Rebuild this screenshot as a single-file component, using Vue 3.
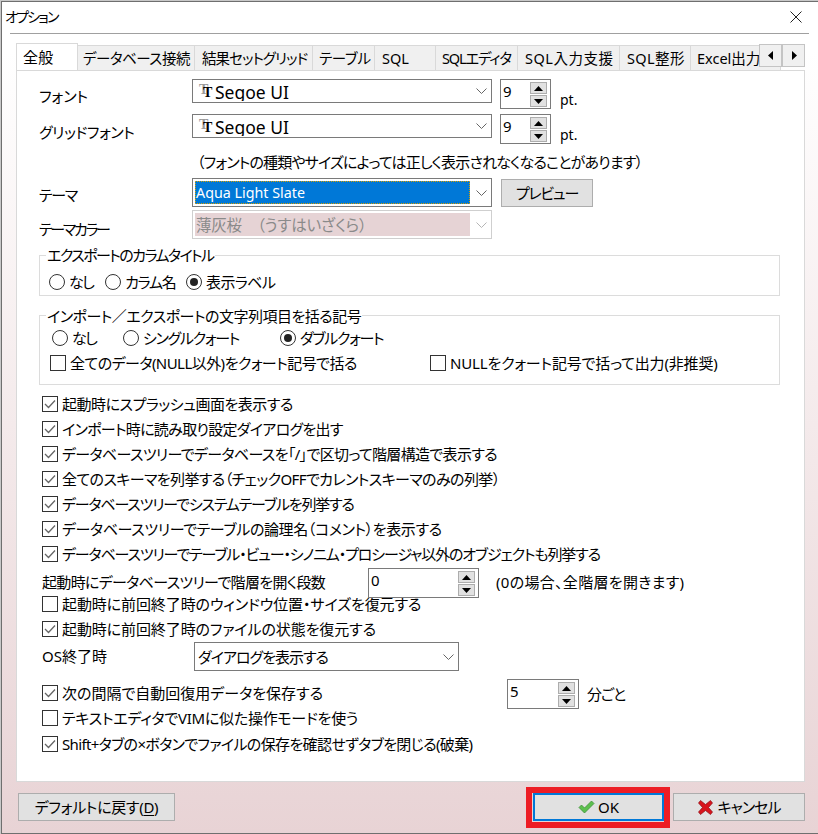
<script setup>
const tabs = [
  { t: '全般', w: 62, pad: 6, ls: 0.3, on: true },
  { t: 'データベース接続', w: 117, pad: 5, ls: -0.5 },
  { t: '結果セットグリッド', w: 118, pad: 7, ls: -0.9 },
  { t: 'テーブル', w: 62, pad: 6, ls: -0.3 },
  { t: 'SQL', w: 61, pad: 7, ls: 0 },
  { t: 'SQLエディタ', w: 82, pad: 6, ls: -1.2 },
  { t: 'SQL入力支援', w: 102, pad: 7, ls: 0.5 },
  { t: 'SQL整形', w: 71, pad: 7, ls: 0.4 },
  { t: 'Excel出力', w: 90, pad: 6, ls: 0 }
]
const checksA = [
  { t: '起動時にスプラッシュ画面を表示する', ls: -0.47 },
  { t: 'インポート時に読み取り設定ダイアログを出す', ls: -0.7 },
  { t: 'データベースツリーでデータベースを「/」で区切って階層構造で表示する', ls: -0.66 },
  { t: '全てのスキーマを列挙する（チェックOFFでカレントスキーマのみの列挙）', ls: -0.6 },
  { t: 'データベースツリーでシステムテーブルを列挙する', ls: -1.17 },
  { t: 'データベースツリーでテーブルの論理名（コメント）を表示する', ls: -0.38 },
  { t: 'データベースツリーでテーブル・ビュー・シノニム・プロシージャ以外のオブジェクトも列挙する', ls: -1.14 }
]
</script>

<template>
  <div class="window">
    <header class="titlebar">
      <span class="title">オプション</span>
      <svg class="close" width="12" height="12" viewBox="0 0 12 12"><path d="M0.5 0.5L11.5 11.5M11.5 0.5L0.5 11.5" stroke="#222" fill="none" /></svg>
    </header>
    <div class="sep"></div>

    <main class="body">
      <div class="tabstrip">
        <div class="tabs">
          <div v-for="tab in tabs" :key="tab.t" class="tab" :class="{ on: tab.on }" :style="{ flexBasis: tab.w + 'px', paddingLeft: tab.pad + 'px', letterSpacing: tab.ls + 'px' }">{{ tab.t }}</div>
        </div>
        <div class="scroller">
          <button class="scrollbtn"><svg width="6" height="9" viewBox="0 0 6 9"><path d="M5 0V9L0 4.5Z" fill="#000" /></svg></button>
          <button class="scrollbtn"><svg width="6" height="9" viewBox="0 0 6 9"><path d="M1 0V9L6 4.5Z" fill="#000" /></svg></button>
        </div>
      </div>

      <section class="panel">
        <div class="row r-font">
          <label class="lbl lbl-a">フォント</label>
          <div class="combo big">
            <span class="tt"><i class="t1">T</i><i class="t2">T</i></span>
            <span class="fontname">Segoe UI</span>
            <svg class="chev" width="11" height="6" viewBox="0 0 11 6"><path d="M0.5 0.5L5.5 5.5L10.5 0.5" stroke="#666" fill="none" /></svg>
          </div>
          <div class="spin s-small"><span class="val">9</span>
            <div class="spinbtns">
              <div class="sb"><svg width="9" height="5" viewBox="0 0 9 5"><path d="M4.5 0L9 5H0Z" /></svg></div>
              <div class="sb"><svg width="9" height="5" viewBox="0 0 9 5"><path d="M4.5 5L9 0H0Z" /></svg></div>
            </div>
          </div>
          <span class="pt">pt.</span>
        </div>
        <div class="row r-font second">
          <label class="lbl lbl-g">グリッドフォント</label>
          <div class="combo big">
            <span class="tt"><i class="t1">T</i><i class="t2">T</i></span>
            <span class="fontname">Segoe UI</span>
            <svg class="chev" width="11" height="6" viewBox="0 0 11 6"><path d="M0.5 0.5L5.5 5.5L10.5 0.5" stroke="#666" fill="none" /></svg>
          </div>
          <div class="spin s-small"><span class="val">9</span>
            <div class="spinbtns">
              <div class="sb"><svg width="9" height="5" viewBox="0 0 9 5"><path d="M4.5 0L9 5H0Z" /></svg></div>
              <div class="sb"><svg width="9" height="5" viewBox="0 0 9 5"><path d="M4.5 5L9 0H0Z" /></svg></div>
            </div>
          </div>
          <span class="pt">pt.</span>
        </div>
        <p class="note">（フォントの種類やサイズによっては正しく表示されなくなることがあります）</p>

        <div class="row r-theme">
          <label class="lbl lbl-b">テーマ</label>
          <div class="combo tall">
            <div class="selected"><span>Aqua Light Slate</span></div>
            <svg class="chev" width="11" height="6" viewBox="0 0 11 6"><path d="M0.5 0.5L5.5 5.5L10.5 0.5" stroke="#666" fill="none" /></svg>
          </div>
          <button class="btn preview">プレビュー</button>
        </div>
        <div class="row r-theme color">
          <label class="lbl lbl-c">テーマカラー</label>
          <div class="combo tall disabled">
            <div class="selected"><span>薄灰桜　（うすはいざくら）</span></div>
            <svg class="chev" width="11" height="6" viewBox="0 0 11 6"><path d="M0.5 0.5L5.5 5.5L10.5 0.5" stroke="#b5b5b5" fill="none" /></svg>
          </div>
        </div>

        <fieldset class="group g1">
          <div class="legend l1">エクスポートのカラムタイトル</div>
          <div class="radios r1">
            <div class="opt s15"><span class="radio"></span>なし</div>
            <div class="opt s12"><span class="radio"></span>カラム名</div>
            <div class="opt s06"><span class="radio on"></span>表示ラベル</div>
          </div>
        </fieldset>

        <fieldset class="group g2">
          <div class="legend l2">インポート／エクスポートの文字列項目を括る記号</div>
          <div class="radios r2">
            <div class="opt s15"><span class="radio"></span>なし</div>
            <div class="opt s13"><span class="radio"></span>シングルクォート</div>
            <div class="opt s13"><span class="radio on"></span>ダブルクォート</div>
          </div>
          <div class="gchecks">
            <div class="opt s055"><span class="box"></span>全てのデータ(NULL以外)をクォート記号で括る</div>
            <div class="opt s017"><span class="box"></span>NULLをクォート記号で括って出力(非推奨)</div>
          </div>
        </fieldset>

        <div class="checks">
          <div v-for="c in checksA" :key="c.t" class="opt chk" :style="{ letterSpacing: c.ls + 'px' }">
            <span class="box"><svg width="12" height="10" viewBox="0 0 12 10"><path d="M1 5L4.5 8.5L11 1.5" stroke="#666" stroke-width="1.3" fill="none" /></svg></span>{{ c.t }}
          </div>
        </div>

        <div class="row r-depth">
          <label class="lbl lbl-d">起動時にデータベースツリーで階層を開く段数</label>
          <div class="spin s-wide"><span class="val">0</span>
            <div class="spinbtns">
              <div class="sb"><svg width="9" height="5" viewBox="0 0 9 5"><path d="M4.5 0L9 5H0Z" /></svg></div>
              <div class="sb"><svg width="9" height="5" viewBox="0 0 9 5"><path d="M4.5 5L9 0H0Z" /></svg></div>
            </div>
          </div>
          <span class="depthnote">(0の場合、全階層を開きます)</span>
        </div>

        <div class="opt chk c-restore"><span class="box"></span>起動時に前回終了時のウィンドウ位置・サイズを復元する</div>
        <div class="opt chk c-next c-file"><span class="box"><svg width="12" height="10" viewBox="0 0 12 10"><path d="M1 5L4.5 8.5L11 1.5" stroke="#666" stroke-width="1.3" fill="none" /></svg></span>起動時に前回終了時のファイルの状態を復元する</div>

        <div class="row r-os">
          <label class="lbl lbl-os">OS終了時</label>
          <div class="combo os">
            <span class="ostext">ダイアログを表示する</span>
            <svg class="chev" width="11" height="6" viewBox="0 0 11 6"><path d="M0.5 0.5L5.5 5.5L10.5 0.5" stroke="#666" fill="none" /></svg>
          </div>
        </div>

        <div class="row r-auto">
          <div class="opt chk c-auto"><span class="box"><svg width="12" height="10" viewBox="0 0 12 10"><path d="M1 5L4.5 8.5L11 1.5" stroke="#666" stroke-width="1.3" fill="none" /></svg></span>次の間隔で自動回復用データを保存する</div>
          <div class="spin s-mid"><span class="val">5</span>
            <div class="spinbtns">
              <div class="sb"><svg width="9" height="5" viewBox="0 0 9 5"><path d="M4.5 0L9 5H0Z" /></svg></div>
              <div class="sb"><svg width="9" height="5" viewBox="0 0 9 5"><path d="M4.5 5L9 0H0Z" /></svg></div>
            </div>
          </div>
          <span class="per">分ごと</span>
        </div>

        <div class="opt chk c-vim"><span class="box"></span>テキストエディタでVIMに似た操作モードを使う</div>
        <div class="opt chk c-shift"><span class="box"><svg width="12" height="10" viewBox="0 0 12 10"><path d="M1 5L4.5 8.5L11 1.5" stroke="#666" stroke-width="1.3" fill="none" /></svg></span>Shift+タブの×ボタンでファイルの保存を確認せずタブを閉じる(破棄)</div>
      </section>

      <footer class="footer">
        <button class="btn default">デフォルトに戻す(<u>D</u>)</button>
        <div class="okmark">
          <button class="btn ok">
            <svg width="17" height="14" viewBox="0 0 17 14"><path d="M1 7.5L3.5 5L6.5 8L13.5 1L16 3.5L6.5 13Z" fill="#5cc04e" stroke="#3f8f3a" stroke-width="0.8" /></svg>
            OK
          </button>
        </div>
        <button class="btn cancel">
          <svg width="15" height="15" viewBox="0 0 15 15"><path d="M2.5 0.5L7.5 4.5L12.5 0.5L14.5 3L10.5 7.5L14.5 12L12.5 14.5L7.5 10.5L2.5 14.5L0.5 12L4.5 7.5L0.5 3Z" fill="#d8141c" stroke="#8c1017" stroke-width="0.7" /></svg>
          <span class="canceltext">キャンセル</span>
        </button>
      </footer>
    </main>
  </div>
</template>

<style>
html, body { margin: 0; background: #c8c8c8; }
#app { width: 818px; height: 834px; overflow: hidden; }
</style>

<style scoped>
* { box-sizing: border-box; }
.window {
  margin: 1px 0 0 1px;
  height: 833px;
  width: 817px;
  border: 1px solid #6f6f6f;
  border-right: 0;
  display: flex;
  flex-direction: column;
  background: linear-gradient(#fff 0, #fff 6%, #e8d3d5 100%);
  font-family: "Noto Sans", "Noto Sans CJK JP", sans-serif;
  font-size: 15px;
  font-feature-settings: "palt";
  color: #000;
  line-height: 20px;
}
.titlebar { height: 31px; flex: none; background: #fff; display: flex; align-items: center; justify-content: space-between; padding: 0 16px 2px 3px; }
.title { font-size: 14px; letter-spacing: -1.8px; }
.sep { height: 1px; margin: 0 9px 0 8px; background: #a0a0a0; flex: none; }
.body { flex: 1; padding: 9px 0 0 14px; display: flex; flex-direction: column; }

.tabstrip { position: relative; width: 789px; height: 27px; overflow: hidden; flex: none; }
.tabs { display: flex; align-items: flex-end; height: 27px; }
.tab { flex: none; height: 25px; background: #f0f0f0; border: 1px solid #d9d9d9; border-left: 0; border-bottom: 0; font-size: 14.5px; line-height: 24px; white-space: nowrap; overflow: hidden; }
.tab.on { height: 28px; margin-bottom: -1px; background: #fff; border-left: 1px solid #d9d9d9; font-size: 15px; line-height: 26px; }
.scroller { position: absolute; right: 0; top: 1px; display: flex; }
.scrollbtn { width: 23px; height: 23px; padding: 0; background: #f0f0f0; border: 1px solid #c4c4c4; display: flex; align-items: center; justify-content: center; }

.panel { width: 789px; height: 712px; flex: none; background: #fff; border: 1px solid #d9d9d9; padding: 8px 0 0 22px; }
.row { display: flex; }
.r-font { height: 30px; }
.second { margin-top: 5px; }
.lbl { flex: none; width: 153px; }
.lbl-a { padding-top: 7px; }
.lbl-g { padding-top: 8px; letter-spacing: -0.4px; }
.lbl-b { padding-top: 7px; letter-spacing: -1.3px; }
.lbl-c { padding-top: 9px; letter-spacing: -2.3px; }
.lbl-d { width: 326px; margin-left: 3px; padding-top: 4px; letter-spacing: -0.67px; }
.lbl-os { width: 152px; margin-left: 3px; padding-top: 4px; }

.combo { position: relative; flex: none; width: 300px; background: #fff; border: 1px solid #7a7a7a; display: flex; align-items: center; }
.combo.big { height: 24px; }
.combo.tall { height: 29px; }
.chev { position: absolute; right: 4px; top: 50%; margin-top: -3px; }
.tt { position: relative; flex: none; width: 17px; height: 16px; margin-left: 6px; font-family: "Liberation Serif", serif; font-weight: bold; }
.tt i { position: absolute; font-style: normal; line-height: 13px; font-size: 14px; }
.t1 { left: 0; top: 0; color: #9a9a9a; }
.t2 { left: 4px; top: 3px; color: #000; }
.fontname { height: 19px; margin-left: -1px; overflow: hidden; font-family: "Noto Sans", sans-serif; font-size: 17.5px; line-height: 20px; }

.spin { flex: none; position: relative; margin-left: 8px; background: #fff; border: 1px solid #7a7a7a; height: 30px; padding: 0 0 0 2px; }
.s-small { width: 51px; }
.s-wide { width: 111px; margin-left: 0; }
.s-mid { width: 72px; margin-left: 0; }
.val { font-size: 15px; line-height: 22px; }
.spinbtns { position: absolute; right: 3px; top: 2px; display: flex; flex-direction: column; gap: 1px; }
.sb { width: 17px; height: 12px; background: #e1e1e1; border: 1px solid #adadad; display: flex; align-items: center; justify-content: center; }
.sb svg { fill: #000; }
.pt { margin-left: 9px; padding-top: 11px; font-family: "Noto Sans", sans-serif; font-size: 14px; }

.note { margin: 8px 0 0 158px; height: 19px; white-space: nowrap; letter-spacing: -0.83px; }

.r-theme { height: 29px; margin-top: 7px; }
.r-theme.color { margin-top: 3px; }
.selected { margin: 2px 0 0 2px; width: 275px; height: 23px; background: #0078d7; color: #fff; outline: 1px dotted #d9a000; outline-offset: -1px; padding-left: 1px; font-size: 14.3px; line-height: 24px; }
.combo.tall { align-items: flex-start; }
.disabled { border-color: #cfcfcf; }
.disabled .selected { background: #e6d3d5; color: #8a8a8a; outline: 0; font-size: 15.5px; letter-spacing: -0.2px; padding-left: 1px; }
.btn { background: #e1e1e1; border: 1px solid #adadad; font: inherit; font-feature-settings: "palt"; padding: 0; display: flex; align-items: center; justify-content: center; color: #000; }
.preview { margin-left: 9px; margin-top: 1px; width: 92px; height: 28px; letter-spacing: -1.2px; }

.group { display: block; margin: 0; padding: 0 0 0 9px; border: 1px solid #dcdcdc; width: 741px; min-width: 0; }
.g1 { margin-top: 16px; height: 41px; }
.g2 { margin-top: 19px; height: 70px; }
.legend { width: fit-content; background: #fff; padding: 0 1px; height: 20px; white-space: nowrap; }
.l1 { margin: -11px 0 0 -3px; letter-spacing: -1.57px; }
.l2 { margin: -10px 0 0 -3px; letter-spacing: -0.5px; }
.radios { display: grid; height: 20px; }
.r1 { grid-template-columns: 56px 81px auto; margin-top: 7px; }
.r2 { grid-template-columns: 71px 157px auto; margin-top: 2px; padding-left: 3px; }
.gchecks { display: grid; grid-template-columns: 380px auto; margin-top: 5px; padding-left: 1px; }
.opt { display: flex; align-items: center; white-space: nowrap; height: 20px; }
.s15 { letter-spacing: -1.5px; }
.s13 { letter-spacing: -1.3px; }
.s12 { letter-spacing: -1.2px; }
.s06 { letter-spacing: -0.6px; }
.s055 { letter-spacing: -0.55px; }
.s017 { letter-spacing: -0.17px; }
.radio { flex: none; width: 16px; height: 16px; margin-right: 4px; border: 1px solid #333; border-radius: 50%; background: #fff; position: relative; }
.radio.on::after { content: ""; position: absolute; left: 3px; top: 3px; width: 8px; height: 8px; border-radius: 50%; background: #222; }
.box { flex: none; width: 16px; height: 16px; margin-right: 4px; border: 1px solid #333; background: #fff; display: flex; align-items: center; justify-content: center; }

.checks { margin-top: 11px; display: flex; flex-direction: column; gap: 9px; }
.chk { height: 16px; margin-left: 3px; }
.r-depth { height: 30px; margin-top: 6px; }
.depthnote { margin-left: 17px; padding-top: 4px; letter-spacing: 0.3px; }
.c-restore { margin-top: -2px; letter-spacing: -0.1px; }
.c-next { margin-top: 9px; }
.c-file { letter-spacing: -0.1px; }
.r-os { margin-top: 5px; height: 29px; }
.combo.os { width: 265px; height: 29px; padding-left: 3px; }
.ostext { letter-spacing: -1px; padding-top: 1px; }
.r-auto { margin-top: 8px; height: 30px; align-items: center; }
.c-auto { width: 465px; margin-top: -2px; }
.c-vim { margin-top: 1px; letter-spacing: -0.25px; }
.c-shift { margin-top: 10px; letter-spacing: -0.65px; }
.per { margin-left: 8px; letter-spacing: -1.2px; }

.footer { position: relative; display: flex; margin-top: 11px; margin-left: 2px; height: 28px; width: 787px; }
.default { width: 157px; height: 28px; letter-spacing: -0.3px; }
.okmark { margin-left: 351px; margin-top: -6px; width: 144px; height: 41px; border: 6px solid #ed1c24; padding: 0 1px; flex: none; }
.ok { width: 131px; height: 28px; border: 2px solid #0078d7; gap: 3px; }
.ok svg, .cancel svg { flex: none; }
.cancel { margin-left: 3px; width: 132px; height: 28px; gap: 5px; }
.canceltext { letter-spacing: -1px; }
u { text-underline-offset: 2px; }
</style>
